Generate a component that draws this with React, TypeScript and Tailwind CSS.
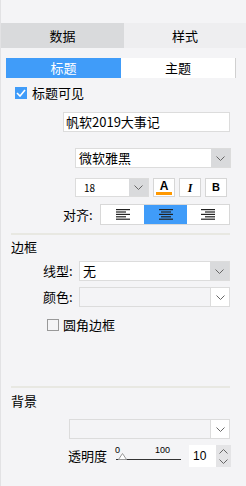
import React from "react";

const font = { fontFamily: '"Noto Sans CJK SC", "Liberation Sans", sans-serif' };

const Chevron = ({ up = false }: { up?: boolean }) => (
  <svg width="9" height="5" viewBox="0 0 9 5" className={up ? "rotate-180" : ""}>
    <polyline points="0.5,0.5 4.5,4.5 8.5,0.5" fill="none" stroke="#666" strokeWidth="1" />
  </svg>
);

const Select = ({ value, width, grey = true, disabled = false }: { value: string; width: string; grey?: boolean; disabled?: boolean }) => (
  <div className={`flex h-[20px] ${width} border border-[#dcdcdc] ${disabled ? "bg-[#f4f4f6]" : "bg-white"}`}>
    <div className="flex-1 pl-[3px] text-[13px] leading-[18px] text-black">{value}</div>
    <div className={`flex w-[19px] items-center justify-center ${grey ? "bg-[#d9dadc]" : "bg-white border-l border-[#dcdcdc]"}`}>
      <Chevron />
    </div>
  </div>
);

const AlignIcon = ({ kind }: { kind: "left" | "center" | "right" }) => {
  const widths = [14, 10, 14, 10, 14];
  return (
    <svg width="14" height="11" viewBox="0 0 14 11">
      {widths.map((w, i) => {
        const x = kind === "left" ? 0 : kind === "right" ? 14 - w : (14 - w) / 2;
        return <rect key={i} x={x} y={i * 2.4} width={w} height="1.2" fill="#222" />;
      })}
    </svg>
  );
};

export default function App() {
  return (
    <div style={font} className="w-[246px] h-[486px] bg-[#f4f4f6] border-l border-[#e2e2e4] text-black overflow-hidden">
      <div className="pt-[23px]">
        <div className="flex h-[25px] text-[13px] leading-[25px]">
          <div className="w-[123px] bg-[#d9dadc] text-center">数据</div>
          <div className="flex-1 bg-[#eeeef0] text-center">样式</div>
        </div>
      </div>

      <div className="ml-[5px] mt-[10px] flex h-[20px] w-[230px] border-r border-[#d0d0d0] text-[13px] leading-[20px]">
        <div className="w-[115px] bg-[#409cf9] text-center text-white">标题</div>
        <div className="flex-1 bg-white text-center">主题</div>
      </div>

      <div className="ml-[14px] mt-[9px] flex h-[12px] items-center gap-[5px]">
        <div className="flex h-[12px] w-[12px] items-center justify-center bg-[#409cf9]">
          <svg width="10" height="8" viewBox="0 0 10 8">
            <polyline points="1,4 4,7 9,1" fill="none" stroke="#fff" strokeWidth="1.6" />
          </svg>
        </div>
        <span className="text-[13px] leading-[12px]">标题可见</span>
      </div>

      <div className="ml-[62px] mt-[13px] h-[20px] w-[167px] border border-[#dcdcdc] bg-white pl-[2px] text-[13px] leading-[18px]">
        帆软2019大事记
      </div>

      <div className="ml-[74px] mt-[16px]">
        <Select value="微软雅黑" width="w-[156px]" />
      </div>

      <div className="ml-[74px] mt-[10px] flex h-[19px] gap-[4px]">
        <div className="flex h-[19px] w-[74px] border border-[#dcdcdc] bg-white">
          <div className="flex-1 pl-[8px] text-[10px] leading-[17px]">18</div>
          <div className="flex w-[19px] items-center justify-center bg-[#d9dadc]">
            <Chevron />
          </div>
        </div>
        <div className="flex h-[19px] w-[22px] flex-col items-center justify-center border border-[#d6d6d6] bg-white">
          <span className="text-[12px] font-bold leading-[11px]" style={{ fontFamily: '"Liberation Sans", sans-serif' }}>A</span>
          <div className="h-[3px] w-[16px] bg-[#ff9800]" />
        </div>
        <div className="flex h-[19px] w-[22px] items-center justify-center border border-[#d6d6d6] bg-white text-[12px] italic font-bold" style={{ fontFamily: '"Liberation Serif", serif' }}>
          I
        </div>
        <div className="flex h-[19px] w-[22px] items-center justify-center border border-[#d6d6d6] bg-white text-[11px] font-bold" style={{ fontFamily: '"Liberation Sans", sans-serif' }}>
          B
        </div>
      </div>

      <div className="mt-[7px] flex h-[21px] items-center">
        <div className="w-[62px]" />
        <span className="w-[36px] text-[13px]">对齐:</span>
        <div className="ml-[1px] flex h-[21px] w-[130px] border border-[#d8d8d8] bg-white">
          <div className="flex w-[43px] items-center justify-center"><AlignIcon kind="left" /></div>
          <div className="flex w-[43px] items-center justify-center bg-[#409cf9]"><AlignIcon kind="center" /></div>
          <div className="flex flex-1 items-center justify-center"><AlignIcon kind="right" /></div>
        </div>
      </div>

      <div className="ml-[10px] mt-[8px] h-[2px] w-[219px] bg-[#e8e8e2]" />

      <div className="ml-[10px] mt-[3px] text-[13px] leading-[17px]">边框</div>

      <div className="mt-[6px] flex h-[20px] items-center">
        <span className="ml-[42px] w-[36px] text-[13px]">线型:</span>
        <Select value="无" width="w-[151px]" />
      </div>

      <div className="mt-[6px] flex h-[20px] items-center">
        <span className="ml-[42px] w-[36px] text-[13px]">颜色:</span>
        <Select value="" width="w-[151px]" grey={false} disabled />
      </div>

      <div className="ml-[46px] mt-[11px] flex h-[13px] items-center gap-[4px]">
        <div className="h-[12px] w-[12px] border border-[#999] bg-[#f4f4f6]" />
        <span className="text-[13px]">圆角边框</span>
      </div>

      <div className="ml-[10px] mt-[55px] h-[2px] w-[219px] bg-[#e8e8e2]" />

      <div className="ml-[10px] mt-[4px] text-[13px] leading-[17px]">背景</div>

      <div className="ml-[68px] mt-[10px]">
        <Select value="" width="w-[161px]" grey={false} disabled />
      </div>

      <div className="mt-[6px] flex h-[22px] items-center">
        <span className="ml-[67px] w-[45px] text-[13px]">透明度</span>
        <div className="relative h-[22px] w-[68px]">
          <span className="absolute left-[2px] top-[-1px] text-[9px]" style={{ fontFamily: '"Liberation Sans", sans-serif' }}>0</span>
          <span className="absolute left-[42px] top-[-1px] text-[9px]" style={{ fontFamily: '"Liberation Sans", sans-serif' }}>100</span>
          <div className="absolute left-[3px] top-[14px] h-[1px] w-[65px] bg-[#333]" />
          <svg className="absolute left-[5px] top-[8px]" width="9" height="7" viewBox="0 0 9 7">
            <polygon points="4.5,0.5 8.5,6.5 0.5,6.5" fill="#fff" stroke="#999" strokeWidth="1" />
          </svg>
        </div>
        <div className="ml-[8px] flex h-[22px] w-[42px] bg-white">
          <div className="flex-1 pl-[4px] text-[12px] leading-[22px]" style={{ fontFamily: '"Liberation Sans", sans-serif' }}>10</div>
          <div className="flex w-[15px] flex-col items-center justify-center gap-[5px] bg-[#e4e4e6]">
            <Chevron up />
            <Chevron />
          </div>
        </div>
      </div>
    </div>
  );
}
